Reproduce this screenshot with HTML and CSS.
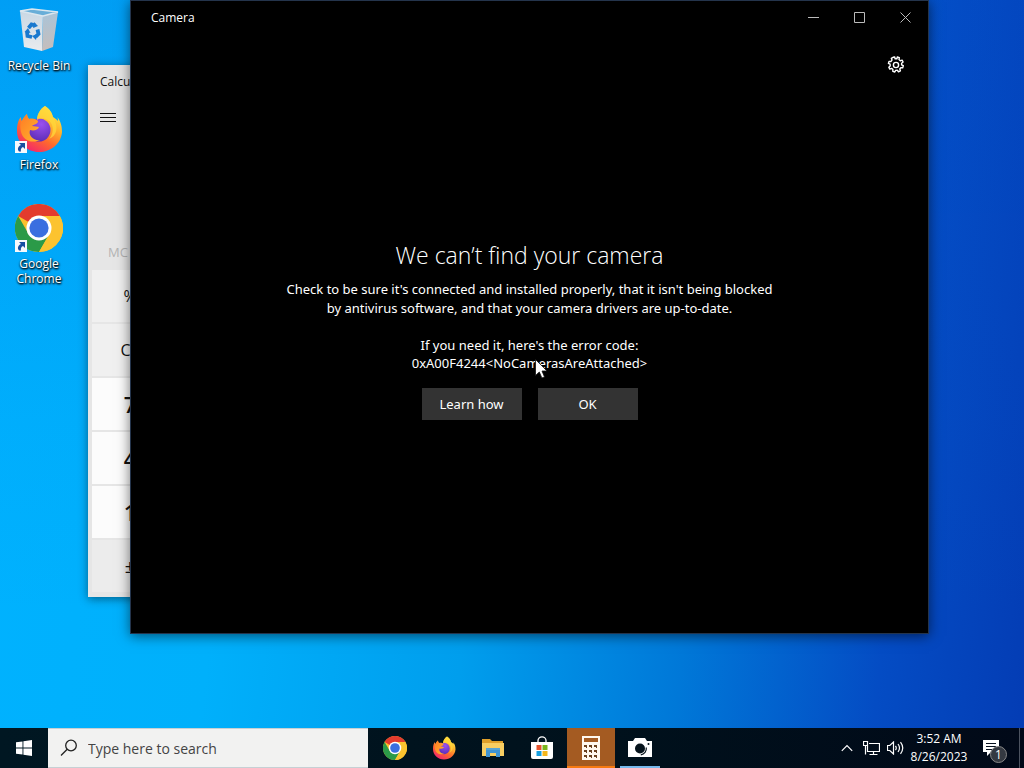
FILE: index.html
```html
<!DOCTYPE html>
<html lang="en">
<head>
<meta charset="utf-8">
<title>Desktop</title>
<link rel="stylesheet" href="styles.css">
</head>
<body>
<svg class="defs" width="0" height="0" aria-hidden="true">
  <defs>
    <linearGradient id="fx-body" x1="0.8" y1="0.05" x2="0.25" y2="0.95">
      <stop offset="0" stop-color="#fff04a"/><stop offset="0.35" stop-color="#ffb02c"/>
      <stop offset="0.65" stop-color="#ff6a2c"/><stop offset="1" stop-color="#f4286a"/>
    </linearGradient>
    <linearGradient id="fx-head" x1="0" y1="0" x2="1" y2="1">
      <stop offset="0" stop-color="#ff7a25"/><stop offset="1" stop-color="#ffb62d"/>
    </linearGradient>
    <radialGradient id="fx-globe" cx="0.6" cy="0.25" r="0.8">
      <stop offset="0" stop-color="#9a50f0"/><stop offset="1" stop-color="#5a2bb4"/>
    </radialGradient>
    <linearGradient id="bin-left" x1="0" y1="0" x2="0" y2="1">
      <stop offset="0" stop-color="#c9d8e4"/><stop offset="1" stop-color="#e9ebee"/>
    </linearGradient>
    <linearGradient id="bin-right" x1="0" y1="0" x2="0" y2="1">
      <stop offset="0" stop-color="#a9c4d8"/><stop offset="1" stop-color="#c6bdbb"/>
    </linearGradient>
  </defs>
  <symbol id="chrome" viewBox="0 0 48 48">
    <circle cx="24" cy="24" r="24" fill="#fbc02d"/>
    <path d="M24 24 3.200 12A24 24 0 0 1 44.800 12H24Z" fill="#e33b2e"/>
    <path d="M3.200 12A24 24 0 0 0 24 48L34.400 30 24 24 13.600 30Z" fill="#2b9a48"/>
    <path d="M24 12h20.800A24 24 0 0 1 24 48l10.400-18Z" fill="#fcc32f"/>
    <circle cx="24" cy="24" r="12.500" fill="#fff"/>
    <circle cx="24" cy="24" r="9.600" fill="#3a6fe0"/>
  </symbol>
  <symbol id="firefox" viewBox="0 0 48 48">
    <path d="M30 1c5 3 7 7 8 11 2 1 4 3 5 4 0-1 0-3-1-4 4 4 5 10 5 15C46 39 36 47 24 47S2 38 2 26C2 20 3 15 6 12c0 2 0 3 1 4 1-3 3-5 5-7 0 2 1 4 2 5 3 0 6 0 8 2 0-6 3-12 8-15Z" fill="url(#fx-body)"/>
    <circle cx="24" cy="25" r="11.500" fill="url(#fx-globe)"/>
    <path d="M7 16c1-3 3-5 5-7 0 2 1 4 2 5 4-1 7 0 9 2 0 3-3 3-6 5 3 0 5 1 7 1-1 3-5 4-9 3-2 6 4 11 10 10-9 4-17 0-19-8-1-4-1-8 0-11Z" fill="url(#fx-head)"/>
    <path d="M22 15c5-3 13-1 15 5 2 5 0 11-3 14 8-3 10-12 4-22-1-4-3-8-8-11-5 3-8 8-8 14Z" fill="#ffd83b" opacity="0.75"/>
  </symbol>
  <symbol id="recycle" viewBox="0 0 40 44">
    <path d="M1 3 24 6 23 43 5 39Z" fill="url(#bin-left)"/>
    <path d="M24 6 39 4 34 39 23 43Z" fill="url(#bin-right)"/>
    <path d="M1 3 13 1 39 4 24 8Z" fill="#68aed8" stroke="#dbe7ef" stroke-width="1.400"/>
    <g fill="none" stroke="#1979cf" stroke-width="3.800">
      <path d="m9.500 20 3-3.500 4 1"/><path d="m18.500 21.500 1 4.500-3 3"/><path d="m13 29-4.500-1-.5-4.500"/>
    </g>
    <g fill="#1979cf"><path d="m15 14 4 4-5 2z"/><path d="m18 26-1 6-4-4z"/><path d="m5.500 24 3.500-4 2.500 5z"/></g>
  </symbol>
  <symbol id="shortcut" viewBox="0 0 12 12">
    <path d="M0 0h12v12H0z" fill="#f7f9fc"/>
    <path d="M4 2h6v6L8 6C6 7 5.500 8.500 6 10.500H4C2 8 3 5.500 6 4Z" fill="#174fa1"/>
  </symbol>
</svg>

<div class="desktop">
  <nav class="shortcuts" aria-label="Desktop icons">
    <a class="shortcut" href="#bin">
      <span class="art"><svg class="bin"><use href="#recycle"/></svg></span>
      <span>Recycle Bin</span>
    </a>
    <a class="shortcut" href="#firefox-app">
      <span class="art"><svg class="app"><use href="#firefox"/></svg><svg class="arrow"><use href="#shortcut"/></svg></span>
      <span>Firefox</span>
    </a>
    <a class="shortcut" href="#chrome-app">
      <span class="art"><svg class="app"><use href="#chrome"/></svg><svg class="arrow"><use href="#shortcut"/></svg></span>
      <span>Google<br>Chrome</span>
    </a>
  </nav>

  <section class="window calculator" aria-label="Calculator">
    <header class="calc-title">Calculator</header>
    <button class="menu" aria-label="Open navigation">
      <svg width="16" height="10" viewBox="0 0 16 10"><path d="M0 .5h16M0 4.500h16M0 8.500h16" stroke="#111"/></svg>
    </button>
    <button class="memory" disabled>MC</button>
    <div class="keys">
      <button class="key">%</button>
      <button class="key">CE</button>
      <button class="key digit">7</button>
      <button class="key digit">4</button>
      <button class="key digit">1</button>
      <button class="key sign">±</button>
    </div>
  </section>

  <section class="window camera" aria-label="Camera">
    <header class="titlebar">
      <span class="title">Camera</span>
      <button class="caption" aria-label="Minimize"><svg width="11" height="11" viewBox="0 0 11 11"><path d="M0 5.500h11"/></svg></button>
      <button class="caption" aria-label="Maximize"><svg width="11" height="11" viewBox="0 0 11 11"><path d="M.5.5h10v10H.5z"/></svg></button>
      <button class="caption" aria-label="Close"><svg width="11" height="11" viewBox="0 0 11 11"><path d="m.5.5 10 10m0-10-10 10"/></svg></button>
    </header>
    <div class="toolbar">
      <button class="settings" aria-label="Settings">
        <svg width="18" height="18" viewBox="0 0 18 18" fill="none" stroke="#fff" stroke-width="1.400" stroke-linejoin="round">
          <path d="m7.700 1 .4 1.800h1.800L10.300 1l2 .7-.3 1.900 1.300 1.200 1.800-.7 1 1.900-1.500 1.200v1.700l1.700.8-.6 2.100-1.900-.1-1 1.300.6 1.800-1.900 1-1.200-1.500-1.700.1-.8 1.600-2-.6.1-1.900-1.300-1.100-1.800.7-1-1.900 1.400-1.300-.1-1.700-1.700-.8.6-2 1.900.1 1.100-1.400-.7-1.800 1.800-1Z"/>
          <circle cx="9" cy="9" r="2.600"/>
        </svg>
      </button>
    </div>
    <div class="message">
      <h1>We can’t find your camera</h1>
      <p>Check to be sure it's connected and installed properly, that it isn't being blocked<br>by antivirus software, and that your camera drivers are up-to-date.</p>
      <p class="error">If you need it, here's the error code:<br>0xA00F4244&lt;NoCamerasAreAttached&gt;</p>
      <div class="actions">
        <button>Learn how</button>
        <button>OK</button>
      </div>
    </div>
  </section>

  <svg class="pointer" width="13" height="20" viewBox="0 0 13 20" aria-hidden="true"><path d="M.5.5v16l3.800-3.500 2.600 6 2.600-1.100L7 12h5Z" fill="#fff" stroke="#111" stroke-width=".8"/></svg>

  <footer class="taskbar">
    <button class="start" aria-label="Start">
      <svg width="16" height="16" viewBox="0 0 16 16" fill="#fff"><path d="M0 2.300 6.500 1.400v6.100H0zM7.400 1.200 16 0v7.500H7.400zM0 8.500h6.500v6.100L0 13.700zM7.400 8.500H16V16l-8.600-1.200z"/></svg>
    </button>
    <label class="search">
      <svg width="18" height="18" viewBox="0 0 18 18" fill="none" stroke="#222" stroke-width="1.300"><circle cx="11" cy="6.500" r="5.300"/><path d="M7.200 10.300 1 16.500"/></svg>
      <input type="text" placeholder="Type here to search" aria-label="Search">
    </label>
    <div class="apps">
      <button class="task" aria-label="Google Chrome"><svg width="24" height="24"><use href="#chrome"/></svg></button>
      <button class="task" aria-label="Firefox"><svg width="24" height="24"><use href="#firefox"/></svg></button>
      <button class="task" aria-label="File Explorer">
        <svg width="24" height="24" viewBox="0 0 24 24"><path d="M1 3h8l2 2h11v5H1z" fill="#e0a02a"/><path d="M1 7h22v13H1z" fill="#f8ce62"/><path d="M5 12h14v9h-4v-4H9v4H5z" fill="#3f94d2"/><path d="M5 12h14v2H5z" fill="#58a4d4"/></svg>
      </button>
      <button class="task" aria-label="Microsoft Store">
        <svg width="24" height="24" viewBox="0 0 24 24"><path d="M8 7V4.500a4 3.700 0 0 1 8 0V7" fill="none" stroke="#fff" stroke-width="1.300"/><path d="M1 6h22v15a2 2 0 0 1-2 2H3a2 2 0 0 1-2-2Z" fill="#fff"/><path d="M6.500 9h5v5h-5z" fill="#e5532d"/><path d="M12.500 9h5v5h-5z" fill="#7ab51d"/><path d="M6.500 15h5v5h-5z" fill="#159fe0"/><path d="M12.500 15h5v5h-5z" fill="#f4b61c"/></svg>
      </button>
      <button class="task attention" aria-label="Calculator">
        <svg width="20" height="24" viewBox="0 0 20 24"><path d="M1 0h18v24H1z" fill="#fff8ef"/><path d="M3 2h14v4H3z" fill="#a45b22"/><path d="M3 9h3v3H5v-1H3zm5 0h3v3h-1v-1H8zm5 0h3v3h-1v-1h-2zM3 14h3v3H5v-1H3zm5 0h3v3h-1v-1H8zm5 0h3v3h-1v-1h-2zM3 19h3v3H5v-1H3zm5 0h3v3h-1v-1H8zm5 0h3v3h-1v-1h-2z" fill="#68401f"/></svg>
      </button>
      <button class="task active" aria-label="Camera">
        <svg width="24" height="20" viewBox="0 0 24 20"><path d="M0 3h5l2-3h10l2 3h5v16H0z" fill="#fff"/><circle cx="12" cy="10.500" r="5" fill="#06131c"/><path d="M18.300 9.500a6.500 6.500 0 0 1-5.500 7.300" fill="none" stroke="#06131c" stroke-width="1.200"/><circle cx="20.500" cy="6" r="1" fill="#06131c"/></svg>
      </button>
    </div>
    <div class="tray">
      <button class="trayicon" aria-label="Show hidden icons"><svg width="12" height="8" viewBox="0 0 12 8"><path d="m.8 6.800 5.200-5.300 5.200 5.300"/></svg></button>
      <button class="trayicon" aria-label="Network"><svg width="17" height="15" viewBox="0 0 17 15"><path d="M6 2.500h10.500v8H4.500V5M10.500 10.500v3M6.500 13.500h8M.5.5h4v4h-4zM2.500 4.500v9"/></svg></button>
      <button class="trayicon" aria-label="Volume"><svg width="17" height="14" viewBox="0 0 17 14"><path d="M.5 4.500h2.300l3.700-3.500v12L2.800 9.500H.5zM8.500 4.800q1.500 2.200 0 4.400M11 3q3 4 0 8M13.500 1.200q4.500 5.800 0 11.600"/></svg></button>
      <button class="clock"><span>3:52 AM</span><span>8/26/2023</span></button>
      <button class="notifications" aria-label="Notifications">
        <svg width="17" height="16" viewBox="0 0 17 16"><path d="M0 0h16v12H8l-4 4v-4H0z" fill="#fff"/><path d="M3 3.500h10M3 6.500h10M3 9.500h6" stroke="#07111f"/></svg>
        <span class="badge">1</span>
      </button>
      <button class="peek" aria-label="Show desktop"></button>
    </div>
  </footer>
</div>
</body>
</html>
```
FILE: styles.css
```css
* { box-sizing: border-box; }
body {
  margin: 0;
  font-family: "Open Sans", "Noto Sans", sans-serif;
  font-size: 12px;
}
button {
  margin: 0;
  padding: 0;
  border: 0;
  background: none;
  color: inherit;
  font: inherit;
}
svg { display: block; }
.defs { position: absolute; }

.desktop {
  position: relative;
  display: flex;
  flex-direction: column;
  height: 100vh;
  overflow: hidden;
  background:
    linear-gradient(rgba(0, 80, 205, 0.2), rgba(0, 100, 215, 0.05) 55%, transparent 80%),
    linear-gradient(96deg, #00b2ff 0%, #00b0fb 25%, #009eed 48%, #0078d8 68%, #044cc4 86%, #043cb4 100%);
}

/* Desktop icons */
.shortcuts {
  display: flex;
  flex: 1;
  flex-direction: column;
  align-items: flex-start;
  padding: 6px 0 0 1px;
  gap: 25px;
}
.shortcut {
  display: flex;
  flex-direction: column;
  align-items: center;
  width: 76px;
  min-height: 74px;
  gap: 4px;
  color: #fff;
  line-height: 15px;
  text-align: center;
  text-decoration: none;
  text-shadow: 1px 1px 2px #000, 0 1px 2px #000;
}
.art {
  position: relative;
  display: grid;
  place-items: center;
  width: 48px;
  height: 48px;
}
.bin { width: 40px; height: 44px; }
.app { width: 48px; height: 48px; }
.arrow { position: absolute; left: 0; bottom: 0; width: 12px; height: 12px; }

.window { position: absolute; }

/* Calculator */
.calculator {
  left: 88px;
  top: 65px;
  display: flex;
  flex-direction: column;
  align-items: flex-start;
  width: 320px;
  padding: 0 4px 5px;
  background: #e6e6e6;
  color: #111;
  box-shadow: 0 2px 9px rgba(0, 0, 0, 0.45);
}
.calc-title { padding: 0 8px; line-height: 34px; }
.menu { padding: 14px 8px; }
.memory {
  margin-top: 100px;
  padding: 0 16px;
  color: #b4b4b4;
  font-size: 13px;
  line-height: 31px;
}
.keys {
  display: grid;
  grid-template-columns: 76px;
  grid-auto-rows: 52px;
  gap: 2px;
  margin-top: 2px;
}
.key { background: #f0f0f0; font-size: 16px; }
.digit { background: #fcfcfc; font-size: 22px; font-weight: 600; }
.sign { background: #ececec; font-size: 18px; }

/* Camera */
.camera {
  top: 0;
  right: 95px;
  bottom: 134px;
  left: 130px;
  display: flex;
  flex-direction: column;
  border: 1px solid #24344c;
  background: #000;
  color: #fff;
  box-shadow: 0 2px 12px rgba(0, 0, 0, 0.55);
}
.titlebar { display: flex; align-items: center; height: 33px; }
.title { flex: 1; padding-left: 20px; }
.caption { display: grid; place-items: center; width: 46px; height: 32px; }
.caption path { fill: none; stroke: #bbb; }
.toolbar { display: flex; justify-content: flex-end; padding: 22px 23px 0; }
.message {
  display: flex;
  flex: 1;
  flex-direction: column;
  align-items: center;
  padding-top: 165px;
  font-family: "Noto Sans", "Open Sans", sans-serif;
  font-size: 13px;
  line-height: 19px;
  text-align: center;
}
h1 {
  margin: 0;
  font-family: "Open Sans", "Noto Sans", sans-serif;
  font-size: 23px;
  font-weight: 300;
  line-height: 32px;
}
p { margin: 9px 0 0; }
.error { margin-top: 18px; line-height: 18px; }
.actions { display: flex; gap: 16px; margin-top: 16px; }
.actions button { width: 100px; height: 32px; background: #333; }

.pointer { position: absolute; left: 535px; top: 359px; }

/* Taskbar */
.taskbar {
  position: relative;
  display: flex;
  height: 40px;
  background: linear-gradient(90deg, #001722, #00111c 60%, #010918);
  color: #fff;
}
.start { display: grid; place-items: center; width: 48px; }
.search {
  display: flex;
  align-items: center;
  flex: 0 1 320px;
  gap: 10px;
  padding: 0 12px;
  border: 1px solid #c6d0d4;
  border-width: 1px 0;
  background: #f2f2f1;
}
.search input {
  flex: 1;
  min-width: 0;
  padding: 0;
  border: 0;
  outline: 0;
  background: none;
  font: 14px "Open Sans", sans-serif;
}
.search input::placeholder { color: #444; opacity: 1; }
.apps { display: flex; gap: 1px; margin-left: 3px; }
.task { display: grid; place-items: center; width: 48px; }
.attention { background: #a45b22; box-shadow: inset 0 -2px #f77a12; }
.active {
  background: linear-gradient(#76b9ed, #76b9ed) center bottom / 40px 2px no-repeat;
}
.tray { display: flex; align-items: stretch; margin-left: auto; }
.trayicon { display: grid; place-items: center; width: 24px; }
.trayicon path { fill: none; stroke: #fff; stroke-width: 1.2; }
.clock {
  display: flex;
  flex-direction: column;
  align-items: center;
  justify-content: center;
  width: 64px;
  line-height: 18px;
}
.notifications { position: relative; display: grid; place-items: center; width: 40px; }
.badge {
  position: absolute;
  right: 4px;
  bottom: 5px;
  width: 17px;
  height: 17px;
  border: 1px solid #888;
  border-radius: 50%;
  background: #343941;
  line-height: 15px;
  text-align: center;
}
.peek { width: 5px; margin-left: 8px; border-left: 1px solid #4c5360; }
```
